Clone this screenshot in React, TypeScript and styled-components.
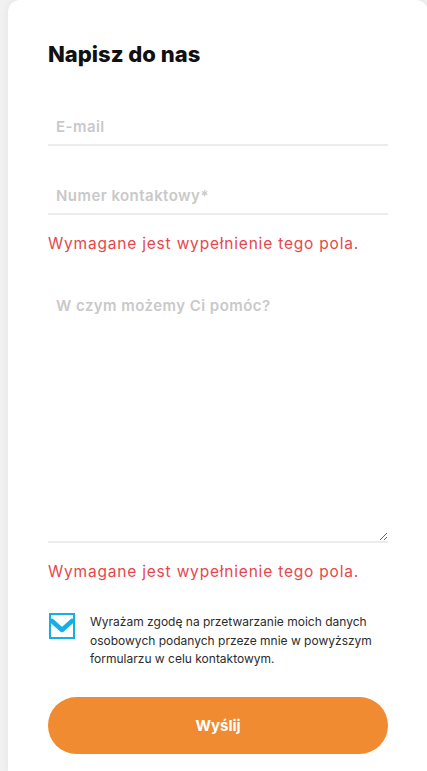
import styled, { createGlobalStyle } from "styled-components";

const GlobalStyle = createGlobalStyle`
  html, body {
    margin: 0;
    padding: 0;
    background: #f1f1f1;
    font-family: "Inter", "Open Sans", sans-serif;
  }
  * { box-sizing: border-box; }
`;

const Page = styled.div`
  display: flex;
  padding-left: 8px;
  min-height: 771px;
  overflow: hidden;
`;

const Card = styled.section`
  width: 420px;
  flex-shrink: 0;
  background: #fff;
  border-radius: 12px 12px 0 0;
  box-shadow: 0 0 8px rgba(0, 0, 0, 0.06);
  padding: 40px 40px 18px;
  display: flex;
  flex-direction: column;
`;

const Title = styled.h2`
  margin: 0;
  font-size: 22px;
  line-height: 28px;
  font-weight: 800;
  color: #111;
`;

const Form = styled.form`
  display: flex;
  flex-direction: column;
`;

const fieldText = `
  border: none;
  border-bottom: 2px solid #ececec;
  padding: 0 8px;
  font-family: inherit;
  font-size: 15px;
  font-weight: 600;
  letter-spacing: 0.45px;
  color: #333;
  outline: none;
  &::placeholder {
    color: #c9c9c9;
  }
`;

const Input = styled.input<{ $gap: number }>`
  ${fieldText}
  margin-top: ${(p) => p.$gap}px;
  height: 38px;
`;

const TextArea = styled.textarea`
  ${fieldText}
  margin-top: 34px;
  height: 255px;
  padding: 8px 8px;
  line-height: 20px;
  resize: vertical;
`;

const Error = styled.p`
  margin: 19px 0 0;
  font-size: 15.5px;
  line-height: 20px;
  letter-spacing: 0.8px;
  color: #e6474c;
`;

const Consent = styled.label`
  margin-top: 31px;
  display: flex;
  gap: 15px;
  align-items: flex-start;
  cursor: pointer;
`;

const Box = styled.span`
  position: relative;
  flex-shrink: 0;
  width: 26px;
  height: 26px;
  border: 2px solid #16aee8;
  margin-left: 1px;
  svg {
    position: absolute;
    left: -1px;
    top: 3px;
  }
`;

const ConsentText = styled.span`
  font-size: 12px;
  line-height: 18.5px;
  color: #2b2b2b;
`;

const Submit = styled.button`
  margin-top: 28px;
  height: 57px;
  border: none;
  border-radius: 29px;
  background: #f18b31;
  color: #fff;
  font-family: inherit;
  font-size: 15px;
  font-weight: 700;
  cursor: pointer;
`;

export default function App() {
  return (
    <>
      <GlobalStyle />
      <Page>
        <Card>
          <Title>Napisz do nas</Title>
          <Form onSubmit={(e) => e.preventDefault()}>
            <Input $gap={40} type="email" placeholder="E-mail" />
            <Input $gap={31} type="tel" placeholder="Numer kontaktowy*" />
            <Error>Wymagane jest wypełnienie tego pola.</Error>
            <TextArea placeholder="W czym możemy Ci pomóc?" />
            <Error>Wymagane jest wypełnienie tego pola.</Error>
            <Consent>
              <Box>
                <svg width="24" height="16" viewBox="0 0 24 16">
                  <polyline
                    points="2,3 12,12 22,3"
                    fill="none"
                    stroke="#16aee8"
                    strokeWidth="4.5"
                    strokeLinecap="round"
                    strokeLinejoin="round"
                  />
                </svg>
              </Box>
              <ConsentText>
                Wyrażam zgodę na przetwarzanie moich danych osobowych podanych
                przeze mnie w powyższym formularzu w celu kontaktowym.
              </ConsentText>
            </Consent>
            <Submit type="submit">Wyślij</Submit>
          </Form>
        </Card>
      </Page>
    </>
  );
}
